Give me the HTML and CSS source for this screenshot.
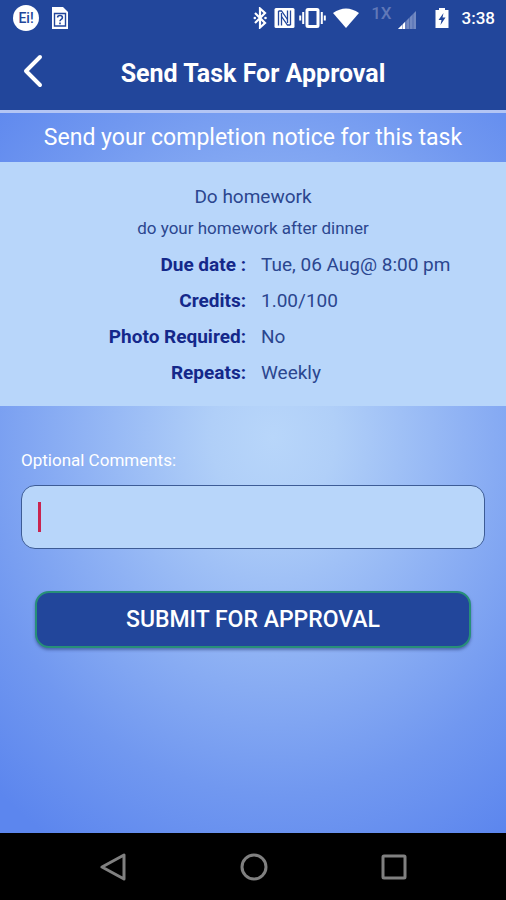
FILE: index.html
```html
<!DOCTYPE html>
<html lang="en">
<head>
    <meta charset="UTF-8">
    <meta name="viewport" content="width=device-width, initial-scale=1.0">
    <title>Send Task For Approval</title>
    <link rel="stylesheet" href="styles.css">
</head>
<body>
    <div class="status-bar">
        <div class="status-group">
            <span class="badge">Ei!</span>
            <svg class="sim" width="18" height="24" viewBox="0 0 18 24">
                <path d="M1 1h11l5 5v17H1z" fill="#fff"/>
                <path d="M3.500 7.500h11v12.500h-11z" fill="none" stroke="#22469b" stroke-width="1.400"/>
                <path d="M6.600 11.500q0-2 2.400-2t2.400 1.900q0 1.200-1.200 2T9 15.200M9 16.600v1.700" fill="none" stroke="#22469b" stroke-width="1.600"/>
            </svg>
        </div>
        <div class="status-group status-right">
            <svg width="14" height="22" viewBox="0 0 14 22">
                <path d="M2 6l10 10-5 4.500V1.500L12 6 2 16" fill="none" stroke="#fff" stroke-width="2.200"/>
                <circle cx="1.800" cy="11" r="1.300" fill="#fff"/>
                <circle cx="12.500" cy="11" r="1.300" fill="#fff"/>
            </svg>
            <svg class="nfc" width="21" height="22" viewBox="0 0 21 22">
                <rect x="0.500" y="1" width="20" height="20" rx="1.500" fill="#fff"/>
                <path d="M4.500 18.500V4M7.500 6v12.500M13.500 3.500V16M16.500 3.500V18" fill="none" stroke="#22469b" stroke-width="1.300"/>
                <path d="M4.500 4l3 0 6 8.500M7.500 9.500l6 8.500h3" fill="none" stroke="#22469b" stroke-width="1.300"/>
            </svg>
            <svg class="vibrate" width="27" height="22" viewBox="0 0 27 22">
                <rect x="8" y="2.500" width="11" height="17" rx="1" fill="none" stroke="#fff" stroke-width="3"/>
                <path d="M4.200 5v12M22.800 5v12M1.200 8.500v5M25.800 8.500v5" stroke="#fff" stroke-width="2"/>
            </svg>
            <svg class="wifi" width="26" height="20" viewBox="0 0 26 20">
                <path d="M0 5Q13-4 26 5L13 20z" fill="#fff"/>
            </svg>
            <span class="network">1X</span>
            <svg class="signal" width="18" height="18" viewBox="0 0 18 18">
                <path d="M18 0v18H0z" fill="#7289c2"/>
                <path d="M7 11v7H0z" fill="#fff"/>
                <path d="M4.500 10v8M8 7v11M11.500 4v14M15 1v17" stroke="#22469b" stroke-opacity=".4"/>
            </svg>
            <svg class="battery" width="14" height="22" viewBox="0 0 14 22">
                <path d="M4 1h6v2h3.500v18H.5V3H4z" fill="#fff"/>
                <path d="M8.500 6L3.500 13h3l-1 5 5-7.500h-3z" fill="#22469b"/>
            </svg>
            <span class="clock">3:38</span>
        </div>
    </div>

    <header class="header">
        <button class="back-btn" type="button" aria-label="Back">
            <svg width="20" height="34" viewBox="0 0 20 34">
                <path d="M17 3L3 17l14 14" fill="none" stroke="#fff" stroke-width="4" stroke-linecap="round" stroke-linejoin="round"/>
            </svg>
        </button>
        <h1>Send Task For Approval</h1>
    </header>

    <main class="content">
        <p class="banner">Send your completion notice for this task</p>

        <section class="task">
            <h2>Do homework</h2>
            <p class="task-desc">do your homework after dinner</p>
            <dl class="details">
                <dt>Due date :</dt><dd>Tue, 06 Aug@ 8:00 pm</dd>
                <dt>Credits:</dt><dd>1.00/100</dd>
                <dt>Photo Required:</dt><dd>No</dd>
                <dt>Repeats:</dt><dd>Weekly</dd>
            </dl>
        </section>

        <form class="approval-form">
            <label for="comments">Optional Comments:</label>
            <div class="field">
                <span class="caret"></span>
                <input id="comments" type="text">
            </div>
            <button class="submit-btn" type="button">SUBMIT FOR APPROVAL</button>
        </form>
    </main>

    <nav class="nav-bar">
        <button type="button" aria-label="Back">
            <svg width="28" height="28" viewBox="0 0 28 28">
                <path d="M25 2v24L3 14z"/>
            </svg>
        </button>
        <button type="button" aria-label="Home">
            <svg width="28" height="28" viewBox="0 0 28 28">
                <circle cx="14" cy="14" r="12"/>
            </svg>
        </button>
        <button type="button" aria-label="Recent apps">
            <svg width="28" height="28" viewBox="0 0 28 28">
                <rect x="3" y="3" width="22" height="22" rx="1"/>
            </svg>
        </button>
    </nav>
</body>
</html>
```
FILE: styles.css
```css
* { box-sizing: border-box; }
body {
    margin: 0;
    min-height: 100vh;
    display: flex;
    flex-direction: column;
    font-family: Roboto, Arial, sans-serif;
    background: #22469b;
    color: #fff;
}
h1, h2, p, dl, dd { margin: 0; }
button {
    padding: 0;
    border: 0;
    background: none;
    font-family: inherit;
    color: inherit;
    cursor: pointer;
}
svg { display: block; }

/* Status bar */
.status-bar {
    display: flex;
    justify-content: space-between;
    align-items: center;
    height: 36px;
    padding: 0 11px 0 13px;
}
.status-group { display: flex; align-items: center; }
.badge {
    width: 26px;
    height: 26px;
    border-radius: 50%;
    background: #fff;
    color: #22469b;
    font-size: 14px;
    font-weight: 500;
    line-height: 26px;
    text-align: center;
}
.sim { margin-left: 12px; }
.nfc { margin-left: 7px; }
.vibrate { margin-left: 4px; }
.wifi { margin-left: 7px; }
.network {
    align-self: flex-start;
    margin-left: 12px;
    font-size: 17px;
    font-weight: 500;
    line-height: 12px;
    color: #6078b8;
}
.signal { margin: 4px 0 0 6px; }
.battery { margin-left: 19px; }
.clock { margin-left: 13px; font-size: 17px; font-weight: 500; }

/* Header */
.header {
    display: grid;
    grid-template-columns: 48px 1fr 48px;
    align-items: center;
    height: 77px;
    padding-bottom: 4px;
    border-bottom: 3px solid #b3c5f4;
}
.back-btn { display: flex; padding-left: 23px; }
.header h1 {
    padding-top: 6px;
    font-size: 25px;
    font-weight: 700;
    line-height: 32px;
    text-align: center;
}

/* Content */
.content {
    flex: 1;
    background: radial-gradient(ellipse 82% 66% at 54% 45%, #b8d6fa 0%, #b0cff8 15%, #8fb2f4 46%, #7198f0 75%, #5c86ee 100%);
}
.banner {
    font-size: 23px;
    line-height: 49px;
    text-align: center;
}
.task {
    padding: 20px 0 15px;
    background: #b8d6fa;
    color: #2b468f;
    text-align: center;
}
.task h2 {
    font-size: 19px;
    font-weight: 400;
    line-height: 30px;
}
.task-desc { font-size: 17px; line-height: 32px; }
.details {
    display: grid;
    grid-template-columns: 246px 1fr;
    column-gap: 15px;
    margin-top: 3px;
    font-size: 19px;
    line-height: 36px;
}
.details dt { text-align: right; font-weight: 700; color: #14288a; }
.details dd { text-align: left; }

/* Form */
.approval-form {
    display: flex;
    flex-direction: column;
    padding: 42px 21px;
}
.approval-form label { font-size: 17px; line-height: 24px; }
.field {
    display: flex;
    align-items: center;
    height: 64px;
    margin-top: 13px;
    padding: 0 16px;
    border: 1px solid #3d5c96;
    border-radius: 14px;
    background: #b8d6fa;
}
.caret { width: 3px; height: 30px; background: #c9244f; }
.field input {
    flex: 1;
    min-width: 0;
    height: 100%;
    border: 0;
    outline: 0;
    background: none;
    color: #23408f;
    font: 19px Roboto, Arial, sans-serif;
}
.submit-btn {
    height: 57px;
    margin: 42px 14px 0;
    border: 2px solid #278f78;
    border-radius: 14px;
    background: #22469b;
    box-shadow: 0 2px 3px rgba(30, 50, 110, 0.5);
    font-size: 23px;
    font-weight: 500;
}

/* Navigation bar */
.nav-bar {
    display: flex;
    justify-content: space-between;
    align-items: center;
    height: 67px;
    padding: 0 98px 0 99px;
    background: #000;
}
.nav-bar svg { fill: none; stroke: #808080; stroke-width: 3; stroke-linejoin: round; }
```
